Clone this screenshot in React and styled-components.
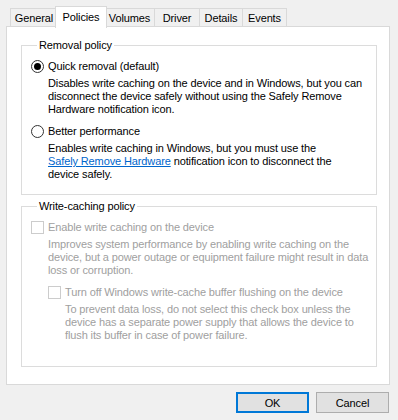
import styled, { createGlobalStyle } from 'styled-components';

const Global = createGlobalStyle`
  html, body {
    margin: 0;
    background: #f0f0f0;
  }
  body {
    font-family: "Liberation Sans", Arial, sans-serif;
    font-size: 11px;
    letter-spacing: -0.12px;
    color: #000;
  }
`;

const tabs = [
  { name: 'General', width: 48 },
  { name: 'Policies', width: 52, active: true },
  { name: 'Volumes', width: 51 },
  { name: 'Driver', width: 46 },
  { name: 'Details', width: 44 },
  { name: 'Events', width: 45 },
];

function Radio({ checked }) {
  return (
    <RadioCircle>
      {checked && <RadioDot />}
    </RadioCircle>
  );
}

function App() {
  return (
    <>
      <Global />
      <Window>
        <TabStrip>
          {tabs.map((t) => (
            <Tab key={t.name} $active={t.active} $width={t.width}>{t.name}</Tab>
          ))}
        </TabStrip>
        <Panel>
          <Group $height={156}>
            <Legend>Removal policy</Legend>
            <OptionRow>
              <Radio checked />
              <Label>Quick removal (default)</Label>
            </OptionRow>
            <Desc>
              Disables write caching on the device and in Windows, but you can<br />
              disconnect the device safely without using the Safely Remove<br />
              Hardware notification icon.
            </Desc>
            <OptionRow $spaced>
              <Radio />
              <Label>Better performance</Label>
            </OptionRow>
            <Desc>
              Enables write caching in Windows, but you must use the<br />
              <Link href="#">Safely Remove Hardware</Link> notification icon to disconnect the<br />
              device safely.
            </Desc>
          </Group>
          <Group $height={167} $gap={5}>
            <Legend>Write-caching policy</Legend>
            <OptionRow>
              <Checkbox />
              <Label $disabled>Enable write caching on the device</Label>
            </OptionRow>
            <Desc $disabled>
              Improves system performance by enabling write caching on the<br />
              device, but a power outage or equipment failure might result in data<br />
              loss or corruption.
            </Desc>
            <Nested>
              <OptionRow $spaced>
                <Checkbox />
                <Label $disabled>Turn off Windows write-cache buffer flushing on the device</Label>
              </OptionRow>
              <Desc $disabled>
                To prevent data loss, do not select this check box unless the<br />
                device has a separate power supply that allows the device to<br />
                flush its buffer in case of power failure.
              </Desc>
            </Nested>
          </Group>
        </Panel>
        <Buttons>
          <Button $default>OK</Button>
          <Button>Cancel</Button>
        </Buttons>
      </Window>
    </>
  );
}

export default App;

const Window = styled.div`
  width: 398px;
  height: 420px;
  box-sizing: border-box;
  padding: 6px 8px 0 6px;
`;

const TabStrip = styled.div`
  display: flex;
  align-items: flex-start;
  height: 21px;
  padding-left: 4px;
  position: relative;
  z-index: 1;
`;

const Tab = styled.div`
  box-sizing: border-box;
  flex: none;
  width: ${(p) => p.$width}px;
  height: ${(p) => (p.$active ? '22px' : '19px')};
  margin: ${(p) => (p.$active ? '0 -2px 0 -3px' : '2px 0 0 -1px')};
  padding-top: ${(p) => (p.$active ? '3px' : '2px')};
  border: 1px solid #d9d9d9;
  border-bottom: ${(p) => (p.$active ? 'none' : '1px solid #d9d9d9')};
  background: ${(p) => (p.$active ? '#fff' : '#f0f0f0')};
  line-height: 14px;
  text-align: center;
  white-space: nowrap;
  position: relative;
  z-index: ${(p) => (p.$active ? 2 : 0)};
  &:first-child {
    margin-left: 0;
  }
`;

const Panel = styled.div`
  box-sizing: border-box;
  height: 359px;
  margin-top: -1px;
  border: 1px solid #d9d9d9;
  background: #fff;
  padding: 12px 12px 0 14px;
  display: flex;
  flex-direction: column;
`;

const Group = styled.fieldset`
  box-sizing: border-box;
  height: ${(p) => p.$height}px;
  margin: ${(p) => p.$gap || 0}px 0 0 0;
  padding: 0 8px 0 9px;
  border: 1px solid #dcdcdc;
  min-width: 0;
`;

const Legend = styled.legend`
  margin-left: 6px;
  padding: 0 2px;
  line-height: 13px;
  height: 13px;
  margin-bottom: 8px;
`;

const OptionRow = styled.div`
  display: flex;
  align-items: center;
  gap: 4px;
  height: 13px;
  margin-top: ${(p) => (p.$spaced ? '9px' : '0')};
`;

const Label = styled.span`
  line-height: 13px;
  white-space: nowrap;
  color: ${(p) => (p.$disabled ? '#a0a0a0' : '#000')};
`;

const Desc = styled.div`
  margin-top: 4px;
  padding-left: 17px;
  line-height: 13px;
  white-space: nowrap;
  color: ${(p) => (p.$disabled ? '#a0a0a0' : '#000')};
`;

const Nested = styled.div`
  padding-left: 17px;
`;

const Link = styled.a`
  color: #0066cc;
  text-decoration: underline;
`;

const RadioCircle = styled.span`
  box-sizing: border-box;
  width: 13px;
  height: 13px;
  flex: none;
  border: 1px solid #333;
  border-radius: 50%;
  background: #fff;
  display: flex;
  align-items: center;
  justify-content: center;
`;

const RadioDot = styled.span`
  width: 7px;
  height: 7px;
  border-radius: 50%;
  background: #000;
`;

const Checkbox = styled.span`
  box-sizing: border-box;
  width: 13px;
  height: 13px;
  flex: none;
  border: 1px solid #cccccc;
  background: #fff;
`;

const Buttons = styled.div`
  display: flex;
  justify-content: flex-end;
  gap: 7px;
  margin-top: 7px;
  padding-right: 1px;
`;

const Button = styled.button`
  box-sizing: border-box;
  width: 73px;
  height: 21px;
  padding: 0;
  font: inherit;
  letter-spacing: inherit;
  color: #000;
  background: #e1e1e1;
  border: ${(p) => (p.$default ? '2px solid #0078d7' : '1px solid #adadad')};
`;
